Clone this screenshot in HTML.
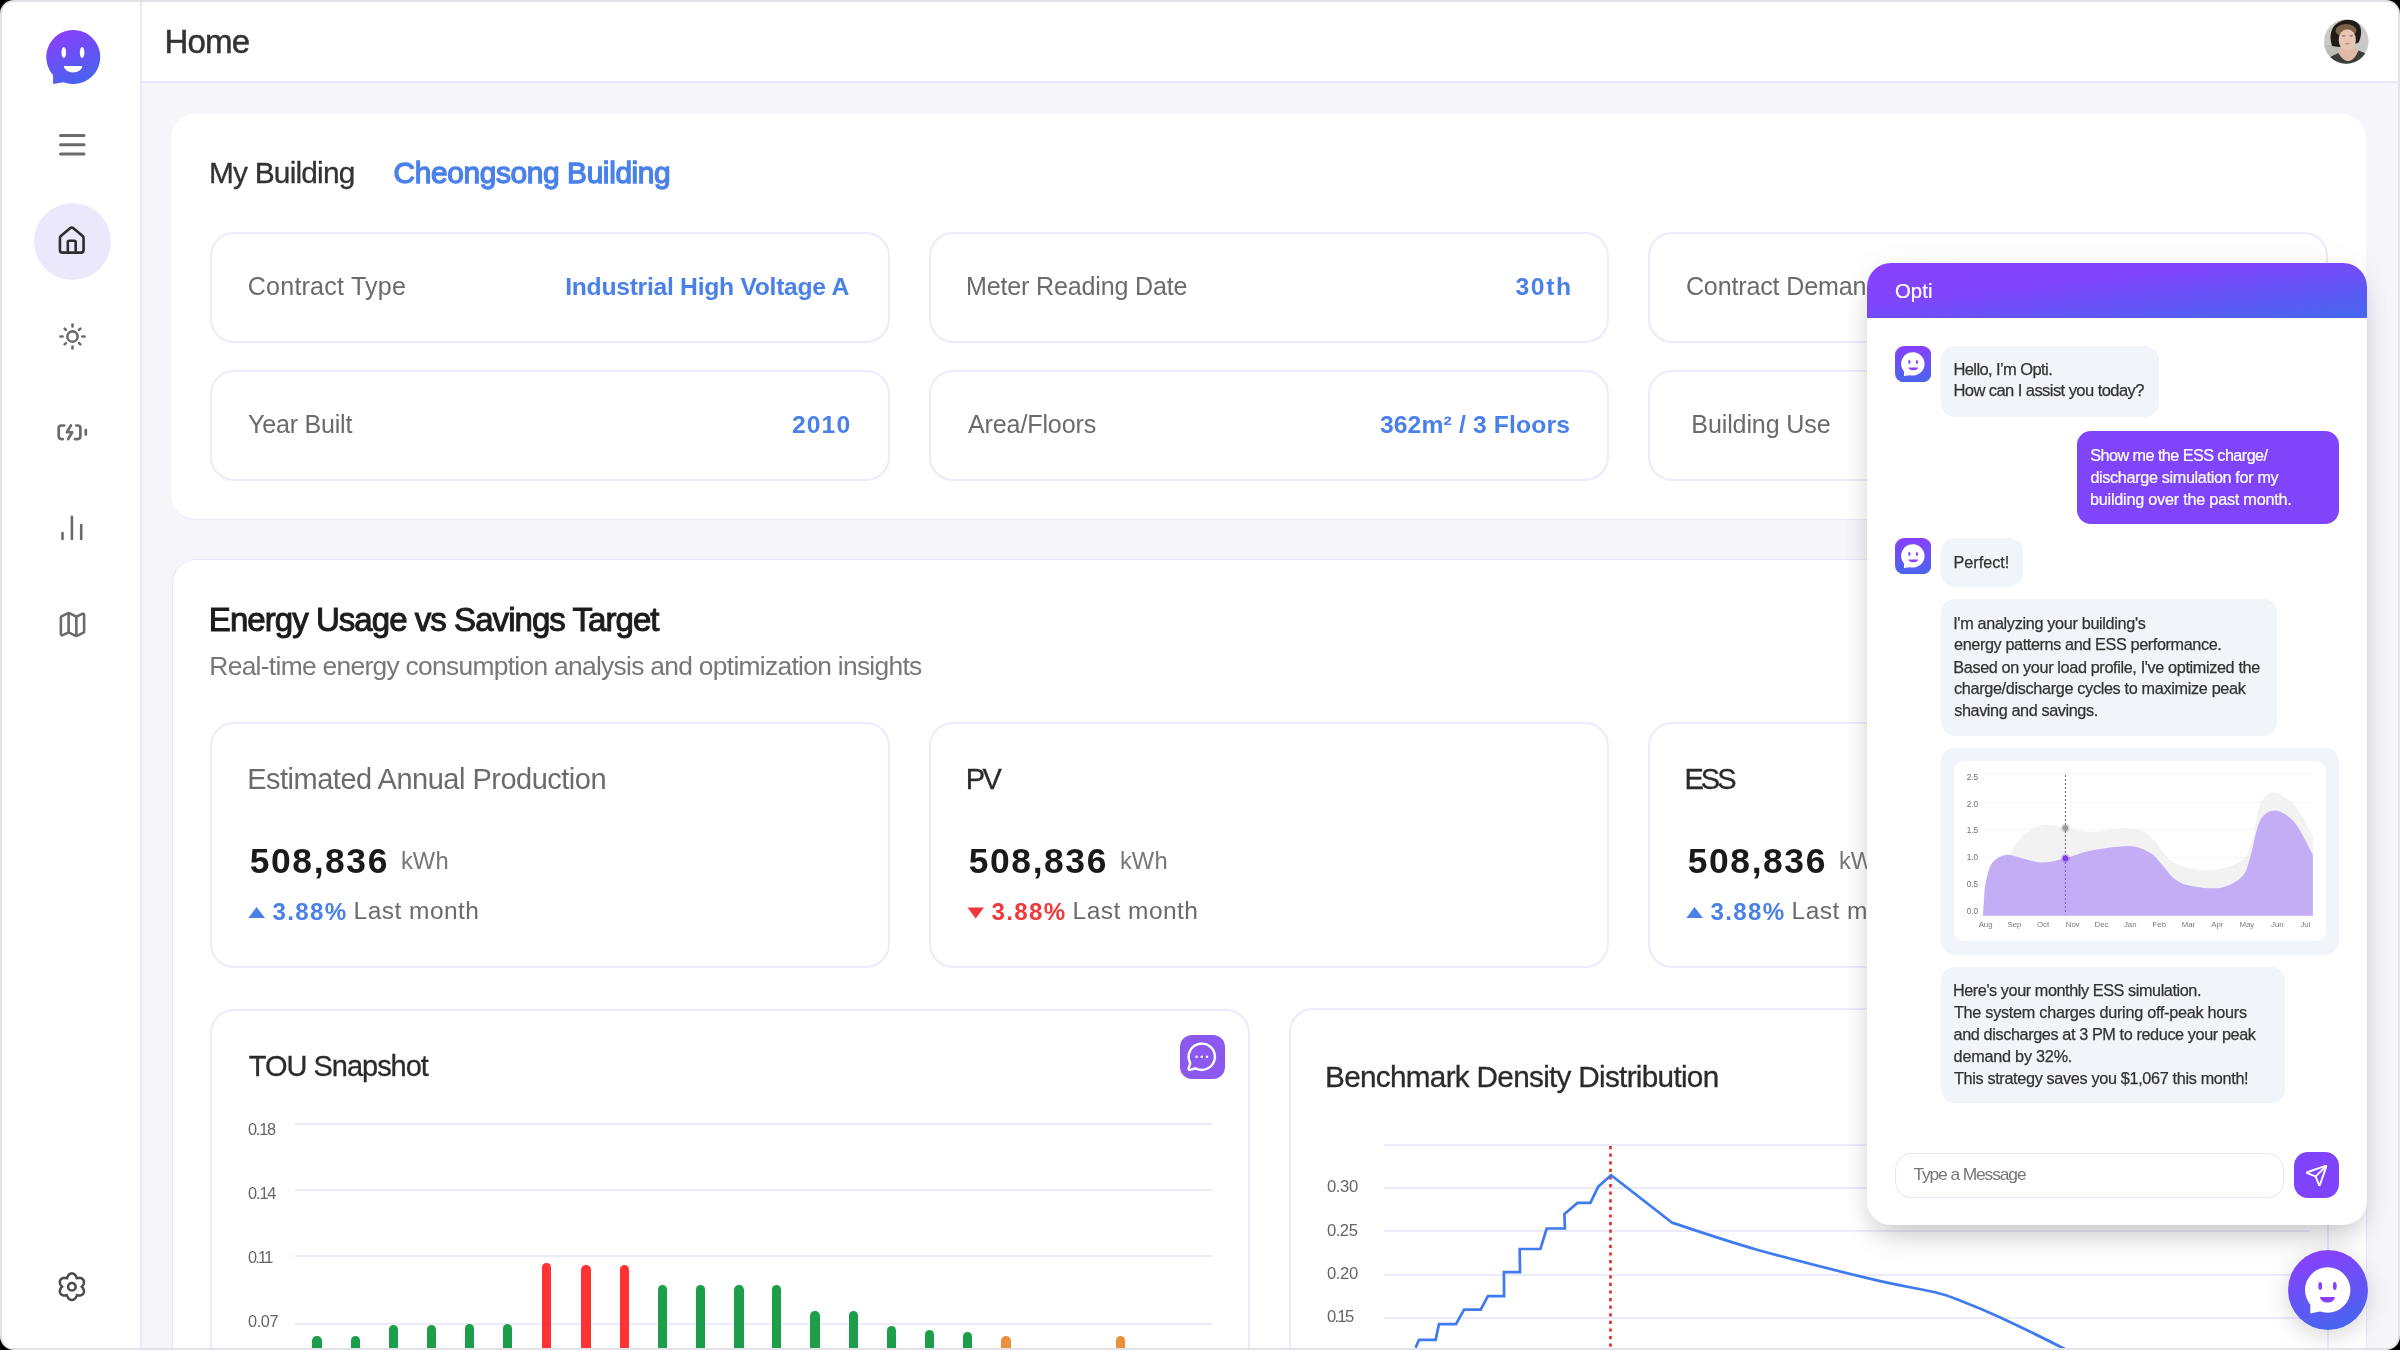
<!DOCTYPE html><html><head><meta charset="utf-8"><style>
html,body{margin:0;padding:0;background:#000;width:2400px;height:1350px;overflow:hidden}
#frame{position:absolute;left:0;top:0;width:2400px;height:1350px;border-radius:14px;background:#e2e2e8;overflow:hidden}
#page{position:absolute;left:2px;top:2px;width:2396px;height:1346px;border-radius:12px;overflow:hidden;background:#fff}
#inner{position:absolute;left:-2px;top:-2px;width:2400px;height:1350px;will-change:transform}
.b{position:absolute}
.t{position:absolute;white-space:nowrap;line-height:1;font-family:"Liberation Sans", sans-serif}
</style></head><body><div id="frame"><div id="page"><div id="inner">
<div class="b" style="left:142px;top:83px;width:2256px;height:1265px;background:#f5f5fa"></div>
<div class="b" style="left:0;top:0;width:140px;height:1350px;background:#fff"></div>
<div class="b" style="left:140px;top:0;width:2px;height:1350px;background:#ebe8fb"></div>
<div class="b" style="left:142px;top:0;width:2258px;height:81px;background:#fff"></div>
<div class="b" style="left:142px;top:81px;width:2258px;height:2px;background:#ebe8fb"></div>
<svg class="b" style="left:0;top:0" width="140" height="100" viewBox="0 0 140 100">
<defs><linearGradient id="lg1" x1="0.3" y1="0" x2="0.7" y2="1"><stop offset="0" stop-color="#8a3ffd"/><stop offset="1" stop-color="#4464ee"/></linearGradient></defs>
<path d="M53.1 75 A27 27 0 1 1 63.5 82.2 L53.1 84.1 Z" fill="url(#lg1)"/>
<ellipse cx="63.8" cy="52.5" rx="2.3" ry="5.4" fill="#fff"/><ellipse cx="82.1" cy="52.5" rx="2.3" ry="5.4" fill="#fff"/>
<path d="M63.8 65.9 L82.4 65.9 A9.3 6.5 0 0 1 63.8 65.9 Z" fill="#fff"/>
</svg>
<svg class="b" style="left:0;top:120px" width="140" height="50"><g stroke="#6b6b6b" stroke-width="3" stroke-linecap="round"><line x1="60.5" y1="15.5" x2="84" y2="15.5"/><line x1="60.5" y1="24.8" x2="84" y2="24.8"/><line x1="60.5" y1="34.1" x2="84" y2="34.1"/></g></svg>
<div class="b" style="left:34px;top:203px;width:77px;height:77px;border-radius:50%;background:#ece8fb"></div>
<svg class="b" style="left:56.35px;top:224.75px" width="31.5" height="31.5" viewBox="0 0 24 24" fill="none" stroke="#2e2e2e" stroke-width="2" stroke-linecap="round" stroke-linejoin="round"><path d="M15 21v-8a1 1 0 0 0-1-1h-4a1 1 0 0 0-1 1v8"/><path d="M3 10a2 2 0 0 1 .709-1.528l7-5.999a2 2 0 0 1 2.582 0l7 5.999A2 2 0 0 1 21 10v9a2 2 0 0 1-2 2H5a2 2 0 0 1-2-2z"/></svg>
<svg class="b" style="left:56.70px;top:321.30px" width="31" height="31" viewBox="0 0 24 24" fill="none" stroke="#6b6b6b" stroke-width="2" stroke-linecap="round" stroke-linejoin="round"><circle cx="12" cy="12" r="4"/><path d="M19.70 12.00 L21.30 12.00"/><path d="M17.09 17.09 L18.08 18.08"/><path d="M12.00 19.70 L12.00 21.30"/><path d="M6.91 17.09 L5.92 18.08"/><path d="M4.30 12.00 L2.70 12.00"/><path d="M6.91 6.91 L5.92 5.92"/><path d="M12.00 4.30 L12.00 2.70"/><path d="M17.09 6.91 L18.08 5.92"/></svg>
<svg class="b" style="left:55.95px;top:415.75px" width="32.5" height="32.5" viewBox="0 0 24 24" fill="none" stroke="#6b6b6b" stroke-width="2" stroke-linecap="round" stroke-linejoin="round"><path d="M15 7h1a2 2 0 0 1 2 2v6a2 2 0 0 1-2 2h-2"/><path d="M6 7H4a2 2 0 0 0-2 2v6a2 2 0 0 0 2 2h1"/><path d="m11 7-3 5h4l-3 5"/><line x1="22" x2="22" y1="10.4" y2="13.6"/></svg>
<svg class="b" style="left:0;top:500px" width="140" height="50"><g stroke="#6b6b6b" stroke-width="2.6" stroke-linecap="round"><line x1="62.5" y1="39" x2="62.5" y2="33"/><line x1="71.9" y1="39" x2="71.9" y2="16.7"/><line x1="81.2" y1="39" x2="81.2" y2="25"/></g></svg>
<svg class="b" style="left:56.50px;top:608.50px" width="31" height="31" viewBox="0 0 24 24" fill="none" stroke="#6b6b6b" stroke-width="2" stroke-linecap="round" stroke-linejoin="round"><path d="M14.106 5.553a2 2 0 0 0 1.788 0l3.659-1.83A1 1 0 0 1 21 4.619v12.764a1 1 0 0 1-.553.894l-4.553 2.277a2 2 0 0 1-1.788 0l-4.212-2.106a2 2 0 0 0-1.788 0l-3.659 1.83A1 1 0 0 1 3 19.381V6.618a1 1 0 0 1 .553-.894l4.553-2.277a2 2 0 0 1 1.788 0z"/><path d="M15 5.764v15"/><path d="M9 3.236v15"/></svg>
<svg class="b" style="left:0;top:0" width="140" height="1350"><path d="M81.60 1286.70 L81.79 1286.87 L81.97 1287.05 L82.15 1287.24 L82.32 1287.43 L82.49 1287.63 L82.65 1287.83 L82.81 1288.04 L82.96 1288.25 L83.09 1288.47 L83.23 1288.70 L83.35 1288.92 L83.46 1289.16 L83.56 1289.39 L83.65 1289.63 L83.73 1289.87 L83.80 1290.11 L83.85 1290.35 L83.90 1290.60 L83.93 1290.84 L83.94 1291.08 L83.95 1291.33 L83.94 1291.57 L83.92 1291.80 L83.89 1292.04 L83.84 1292.27 L83.78 1292.50 L83.71 1292.72 L83.63 1292.93 L83.53 1293.15 L83.42 1293.35 L83.30 1293.55 L83.16 1293.74 L83.02 1293.92 L82.86 1294.09 L82.69 1294.26 L82.52 1294.41 L82.33 1294.56 L82.14 1294.70 L81.93 1294.82 L81.72 1294.94 L81.50 1295.04 L81.27 1295.14 L81.04 1295.22 L80.80 1295.30 L80.56 1295.36 L80.31 1295.41 L80.06 1295.45 L79.81 1295.48 L79.55 1295.50 L79.29 1295.51 L79.03 1295.51 L78.77 1295.50 L78.51 1295.48 L78.26 1295.45 L78.00 1295.41 L77.74 1295.36 L77.49 1295.31 L77.24 1295.25 L76.99 1295.18 L76.75 1295.10 L76.69 1295.35 L76.63 1295.60 L76.56 1295.84 L76.48 1296.09 L76.39 1296.34 L76.30 1296.58 L76.19 1296.82 L76.08 1297.05 L75.96 1297.28 L75.83 1297.51 L75.70 1297.73 L75.55 1297.94 L75.40 1298.14 L75.24 1298.34 L75.07 1298.53 L74.89 1298.71 L74.71 1298.88 L74.52 1299.04 L74.33 1299.19 L74.13 1299.32 L73.92 1299.45 L73.71 1299.56 L73.49 1299.66 L73.27 1299.75 L73.05 1299.83 L72.82 1299.89 L72.59 1299.94 L72.36 1299.97 L72.13 1299.99 L71.90 1300.00 L71.67 1299.99 L71.44 1299.97 L71.21 1299.94 L70.98 1299.89 L70.75 1299.83 L70.53 1299.75 L70.31 1299.66 L70.09 1299.56 L69.88 1299.45 L69.67 1299.32 L69.47 1299.19 L69.28 1299.04 L69.09 1298.88 L68.91 1298.71 L68.73 1298.53 L68.56 1298.34 L68.40 1298.14 L68.25 1297.94 L68.10 1297.73 L67.97 1297.51 L67.84 1297.28 L67.72 1297.05 L67.61 1296.82 L67.50 1296.58 L67.41 1296.34 L67.32 1296.09 L67.24 1295.84 L67.17 1295.60 L67.11 1295.35 L67.05 1295.10 L66.81 1295.18 L66.56 1295.25 L66.31 1295.31 L66.06 1295.36 L65.80 1295.41 L65.54 1295.45 L65.29 1295.48 L65.03 1295.50 L64.77 1295.51 L64.51 1295.51 L64.25 1295.50 L63.99 1295.48 L63.74 1295.45 L63.49 1295.41 L63.24 1295.36 L63.00 1295.30 L62.76 1295.22 L62.53 1295.14 L62.30 1295.04 L62.08 1294.94 L61.87 1294.82 L61.66 1294.70 L61.47 1294.56 L61.28 1294.41 L61.11 1294.26 L60.94 1294.09 L60.78 1293.92 L60.64 1293.74 L60.50 1293.55 L60.38 1293.35 L60.27 1293.15 L60.17 1292.93 L60.09 1292.72 L60.02 1292.50 L59.96 1292.27 L59.91 1292.04 L59.88 1291.80 L59.86 1291.57 L59.85 1291.33 L59.86 1291.08 L59.87 1290.84 L59.90 1290.60 L59.95 1290.35 L60.00 1290.11 L60.07 1289.87 L60.15 1289.63 L60.24 1289.39 L60.34 1289.16 L60.45 1288.92 L60.57 1288.70 L60.71 1288.47 L60.84 1288.25 L60.99 1288.04 L61.15 1287.83 L61.31 1287.63 L61.48 1287.43 L61.65 1287.24 L61.83 1287.05 L62.01 1286.87 L62.20 1286.70 L62.01 1286.53 L61.83 1286.35 L61.65 1286.16 L61.48 1285.97 L61.31 1285.77 L61.15 1285.57 L60.99 1285.36 L60.84 1285.15 L60.71 1284.93 L60.57 1284.70 L60.45 1284.48 L60.34 1284.24 L60.24 1284.01 L60.15 1283.77 L60.07 1283.53 L60.00 1283.29 L59.95 1283.05 L59.90 1282.80 L59.87 1282.56 L59.86 1282.32 L59.85 1282.07 L59.86 1281.83 L59.88 1281.60 L59.91 1281.36 L59.96 1281.13 L60.02 1280.90 L60.09 1280.68 L60.17 1280.47 L60.27 1280.25 L60.38 1280.05 L60.50 1279.85 L60.64 1279.66 L60.78 1279.48 L60.94 1279.31 L61.11 1279.14 L61.28 1278.99 L61.47 1278.84 L61.66 1278.70 L61.87 1278.58 L62.08 1278.46 L62.30 1278.36 L62.53 1278.26 L62.76 1278.18 L63.00 1278.10 L63.24 1278.04 L63.49 1277.99 L63.74 1277.95 L63.99 1277.92 L64.25 1277.90 L64.51 1277.89 L64.77 1277.89 L65.03 1277.90 L65.29 1277.92 L65.54 1277.95 L65.80 1277.99 L66.06 1278.04 L66.31 1278.09 L66.56 1278.15 L66.81 1278.22 L67.05 1278.30 L67.11 1278.05 L67.17 1277.80 L67.24 1277.56 L67.32 1277.31 L67.41 1277.06 L67.50 1276.82 L67.61 1276.58 L67.72 1276.35 L67.84 1276.12 L67.97 1275.89 L68.10 1275.67 L68.25 1275.46 L68.40 1275.26 L68.56 1275.06 L68.73 1274.87 L68.91 1274.69 L69.09 1274.52 L69.28 1274.36 L69.47 1274.21 L69.67 1274.08 L69.88 1273.95 L70.09 1273.84 L70.31 1273.74 L70.53 1273.65 L70.75 1273.57 L70.98 1273.51 L71.21 1273.46 L71.44 1273.43 L71.67 1273.41 L71.90 1273.40 L72.13 1273.41 L72.36 1273.43 L72.59 1273.46 L72.82 1273.51 L73.05 1273.57 L73.27 1273.65 L73.49 1273.74 L73.71 1273.84 L73.92 1273.95 L74.13 1274.08 L74.33 1274.21 L74.52 1274.36 L74.71 1274.52 L74.89 1274.69 L75.07 1274.87 L75.24 1275.06 L75.40 1275.26 L75.55 1275.46 L75.70 1275.67 L75.83 1275.89 L75.96 1276.12 L76.08 1276.35 L76.19 1276.58 L76.30 1276.82 L76.39 1277.06 L76.48 1277.31 L76.56 1277.56 L76.63 1277.80 L76.69 1278.05 L76.75 1278.30 L76.99 1278.22 L77.24 1278.15 L77.49 1278.09 L77.74 1278.04 L78.00 1277.99 L78.26 1277.95 L78.51 1277.92 L78.77 1277.90 L79.03 1277.89 L79.29 1277.89 L79.55 1277.90 L79.81 1277.92 L80.06 1277.95 L80.31 1277.99 L80.56 1278.04 L80.80 1278.10 L81.04 1278.18 L81.27 1278.26 L81.50 1278.36 L81.72 1278.46 L81.93 1278.58 L82.14 1278.70 L82.33 1278.84 L82.52 1278.99 L82.69 1279.14 L82.86 1279.31 L83.02 1279.48 L83.16 1279.66 L83.30 1279.85 L83.42 1280.05 L83.53 1280.25 L83.63 1280.47 L83.71 1280.68 L83.78 1280.90 L83.84 1281.13 L83.89 1281.36 L83.92 1281.60 L83.94 1281.83 L83.95 1282.07 L83.94 1282.32 L83.93 1282.56 L83.90 1282.80 L83.85 1283.05 L83.80 1283.29 L83.73 1283.53 L83.65 1283.77 L83.56 1284.01 L83.46 1284.24 L83.35 1284.48 L83.23 1284.70 L83.09 1284.93 L82.96 1285.15 L82.81 1285.36 L82.65 1285.57 L82.49 1285.77 L82.32 1285.97 L82.15 1286.16 L81.97 1286.35 L81.79 1286.53 L81.60 1286.70Z" fill="none" stroke="#4a4a4a" stroke-width="2.5" stroke-linejoin="round"/><circle cx="71.9" cy="1286.7" r="3.8" fill="none" stroke="#4a4a4a" stroke-width="2.5"/></svg>
<div class="t" style="left:164.52px;top:24.71px;font-size:33.04px;letter-spacing:-0.840px;color:#333333;-webkit-text-stroke:0.5px #333333;">Home</div>
<svg class="b" style="left:2324px;top:18.5px" width="45" height="45" viewBox="0 0 45 45">
<defs><clipPath id="avc"><circle cx="22.3" cy="22.5" r="22.3"/></clipPath></defs>
<g clip-path="url(#avc)"><rect width="45" height="45" fill="#c9c9c7"/>
<rect x="0" y="26" width="18" height="19" fill="#bdbeba"/>
<path d="M8 27 Q4 14 11 6 Q19 -1 30 1.5 Q38 5 37 15 Q36 22 34 24 L15 28 Z" fill="#1e1b18"/>
<ellipse cx="22" cy="11.5" rx="10.5" ry="6.5" fill="#7b624a"/>
<path d="M14 34 Q16 29 18 27 L29 27 Q32 29 35 32 Q29 42 24.5 42.2 Q18 42 14 34 Z" fill="#dfbaa5"/>
<ellipse cx="23.3" cy="21" rx="8.6" ry="10.8" fill="#e6c6b3"/>
<ellipse cx="19.7" cy="16.8" rx="1.9" ry="0.9" fill="#9c8074"/><ellipse cx="27.4" cy="16.8" rx="1.9" ry="0.9" fill="#9c8074"/>
<ellipse cx="23.5" cy="24.7" rx="2.6" ry="0.8" fill="#b98c82"/>
<path d="M0 45 L2 40 Q8 37 14.4 33.9 Q19 42 24.5 42.2 Q30 42 34.6 31.5 Q39 33 45 36 L45 45 Z" fill="#3b3d39"/>
</g></svg>
<div class="b" style="left:171px;top:114px;width:2195px;height:406px;background:#fff;border-radius:24px;border-bottom:1.5px solid #ebe8fb;box-sizing:border-box"></div>
<div class="t" style="left:209.07px;top:157.62px;font-size:29.86px;letter-spacing:-0.811px;color:#333333;-webkit-text-stroke:0.3px #333333;">My Building</div>
<div class="t" style="left:393.60px;top:157.62px;font-size:29.86px;letter-spacing:-0.376px;color:#4a80ea;-webkit-text-stroke:1.3px #4a80ea;">Cheongsong Building</div>
<div class="b" style="left:210px;top:232px;width:680px;height:111px;border:2px solid #eceafc;border-radius:24px;box-sizing:border-box"></div>
<div class="b" style="left:210px;top:370px;width:680px;height:111px;border:2px solid #eceafc;border-radius:24px;box-sizing:border-box"></div>
<div class="b" style="left:929px;top:232px;width:680px;height:111px;border:2px solid #eceafc;border-radius:24px;box-sizing:border-box"></div>
<div class="b" style="left:929px;top:370px;width:680px;height:111px;border:2px solid #eceafc;border-radius:24px;box-sizing:border-box"></div>
<div class="b" style="left:1648px;top:232px;width:680px;height:111px;border:2px solid #eceafc;border-radius:24px;box-sizing:border-box"></div>
<div class="b" style="left:1648px;top:370px;width:680px;height:111px;border:2px solid #eceafc;border-radius:24px;box-sizing:border-box"></div>
<div class="t" style="left:247.80px;top:274.49px;font-size:25.07px;letter-spacing:0.206px;color:#6b6b6b;">Contract Type</div>
<div class="t" style="left:565.20px;top:274.79px;font-size:24.71px;letter-spacing:-0.285px;color:#4a80ea;font-weight:bold;">Industrial High Voltage A</div>
<div class="t" style="left:248.00px;top:412.49px;font-size:25.07px;letter-spacing:-0.215px;color:#6b6b6b;">Year Built</div>
<div class="t" style="left:791.90px;top:412.79px;font-size:24.71px;letter-spacing:1.123px;color:#4a80ea;font-weight:bold;">2010</div>
<div class="t" style="left:966.00px;top:274.49px;font-size:25.07px;letter-spacing:-0.161px;color:#6b6b6b;">Meter Reading Date</div>
<div class="t" style="left:1515.40px;top:274.79px;font-size:24.71px;letter-spacing:1.661px;color:#4a80ea;font-weight:bold;">30th</div>
<div class="t" style="left:968.00px;top:412.49px;font-size:25.07px;letter-spacing:-0.135px;color:#6b6b6b;">Area/Floors</div>
<div class="t" style="left:1379.90px;top:412.79px;font-size:24.71px;letter-spacing:0.126px;color:#4a80ea;font-weight:bold;">362m² / 3 Floors</div>
<div class="t" style="left:1685.90px;top:274.49px;font-size:25.07px;letter-spacing:-0.146px;color:#6b6b6b">Contract Demand</div>
<div class="t" style="left:1691.30px;top:412.49px;font-size:25.07px;letter-spacing:-0.129px;color:#6b6b6b;">Building Use</div>
<div class="b" style="left:171.5px;top:559px;width:2195.0px;height:841px;background:#fff;border:1.5px solid #e9e6fb;border-radius:24px;box-sizing:border-box"></div>
<div class="t" style="left:208.82px;top:603.01px;font-size:33.04px;letter-spacing:-0.962px;color:#1c1c1c;-webkit-text-stroke:1.0px #1c1c1c;">Energy Usage vs Savings Target</div>
<div class="t" style="left:209.34px;top:653.38px;font-size:26.38px;letter-spacing:-0.702px;color:#777777;">Real-time energy consumption analysis and optimization insights</div>
<div class="b" style="left:210px;top:722px;width:680px;height:246px;border:2px solid #eceafc;border-radius:24px;box-sizing:border-box"></div>
<div class="t" style="left:247.24px;top:765.16px;font-size:28.99px;letter-spacing:-0.497px;color:#6b6b6b;">Estimated Annual Production</div>
<div class="t" style="left:249.75px;top:844.19px;font-size:35.43px;letter-spacing:1.595px;color:#1a1a1a;font-weight:bold;">508,836</div>
<div class="t" style="left:400.90px;top:849.74px;font-size:23.71px;letter-spacing:0.131px;color:#777777;">kWh</div>
<svg class="b" style="left:248px;top:906px" width="18" height="13"><path d="M8.5 1 L17 12 L0.5 12Z" fill="#4a80ea"/></svg>
<div class="t" style="left:272.40px;top:899.68px;font-size:24.14px;letter-spacing:1.379px;color:#4a80ea;font-weight:bold;">3.88%</div>
<div class="t" style="left:353.60px;top:899.38px;font-size:24.49px;letter-spacing:0.473px;color:#6b6b6b;">Last month</div>
<div class="b" style="left:929px;top:722px;width:680px;height:246px;border:2px solid #eceafc;border-radius:24px;box-sizing:border-box"></div>
<div class="t" style="left:965.64px;top:765.16px;font-size:28.99px;letter-spacing:-2.443px;color:#2b2b2b;-webkit-text-stroke:0.3px #2b2b2b;">PV</div>
<div class="t" style="left:968.75px;top:844.19px;font-size:35.43px;letter-spacing:1.595px;color:#1a1a1a;font-weight:bold;">508,836</div>
<div class="t" style="left:1119.90px;top:849.74px;font-size:23.71px;letter-spacing:0.131px;color:#777777;">kWh</div>
<svg class="b" style="left:967px;top:906px" width="18" height="13"><path d="M0.5 1.5 L17 1.5 L8.7 12.5Z" fill="#f0383a"/></svg>
<div class="t" style="left:991.40px;top:899.68px;font-size:24.14px;letter-spacing:1.379px;color:#f0383a;font-weight:bold;">3.88%</div>
<div class="t" style="left:1072.60px;top:899.38px;font-size:24.49px;letter-spacing:0.473px;color:#6b6b6b;">Last month</div>
<div class="b" style="left:1648px;top:722px;width:680px;height:246px;border:2px solid #eceafc;border-radius:24px;box-sizing:border-box"></div>
<div class="t" style="left:1684.44px;top:765.16px;font-size:28.99px;letter-spacing:-2.908px;color:#2b2b2b;-webkit-text-stroke:0.3px #2b2b2b;">ESS</div>
<div class="t" style="left:1687.75px;top:844.19px;font-size:35.43px;letter-spacing:1.595px;color:#1a1a1a;font-weight:bold;">508,836</div>
<div class="t" style="left:1838.90px;top:849.74px;font-size:23.71px;letter-spacing:0.131px;color:#777777;">kWh</div>
<svg class="b" style="left:1686px;top:906px" width="18" height="13"><path d="M8.5 1 L17 12 L0.5 12Z" fill="#4a80ea"/></svg>
<div class="t" style="left:1710.40px;top:899.68px;font-size:24.14px;letter-spacing:1.379px;color:#4a80ea;font-weight:bold;">3.88%</div>
<div class="t" style="left:1791.60px;top:899.38px;font-size:24.49px;letter-spacing:0.473px;color:#6b6b6b;">Last month</div>
<div class="b" style="left:210px;top:1009px;width:1040px;height:391px;background:#fff;border:2px solid #eceafc;border-radius:24px;box-sizing:border-box"></div>
<div class="t" style="left:248.75px;top:1052.46px;font-size:28.99px;letter-spacing:-1.003px;color:#2b2b2b;-webkit-text-stroke:0.3px #2b2b2b;">TOU Snapshot</div>
<div class="b" style="left:1180px;top:1034.5px;width:45px;height:44px;border-radius:12px;background:#8b58f0"></div>
<svg class="b" style="left:1185.75px;top:1040.55px" width="31.5" height="31.5" viewBox="0 0 24 24" fill="none" stroke="#ffffff" stroke-width="1.85" stroke-linecap="round" stroke-linejoin="round"><path d="M2.992 16.342a2 2 0 0 1 .094 1.167l-1.065 3.29a1 1 0 0 0 1.236 1.168l3.413-.998a2 2 0 0 1 1.099.092 10 10 0 1 0-4.777-4.719"/><path d="M8 12h.01"/><path d="M12 12h.01"/><path d="M16 12h.01"/></svg>
<div class="b" style="left:295px;top:1123px;width:917px;height:2px;background:#edebfb"></div>
<div class="b" style="left:295px;top:1189px;width:917px;height:2px;background:#edebfb"></div>
<div class="b" style="left:295px;top:1255px;width:917px;height:2px;background:#edebfb"></div>
<div class="b" style="left:295px;top:1323px;width:917px;height:2px;background:#edebfb"></div>
<div class="b" style="left:312.3px;top:1336.4px;width:9.4px;height:23.6px;background:#1d9e48;border-radius:4.7px 4.7px 0 0"></div>
<div class="b" style="left:350.5px;top:1336.4px;width:9.4px;height:23.6px;background:#1d9e48;border-radius:4.7px 4.7px 0 0"></div>
<div class="b" style="left:388.7px;top:1325.2px;width:9.4px;height:34.8px;background:#1d9e48;border-radius:4.7px 4.7px 0 0"></div>
<div class="b" style="left:426.9px;top:1325.2px;width:9.4px;height:34.8px;background:#1d9e48;border-radius:4.7px 4.7px 0 0"></div>
<div class="b" style="left:465.1px;top:1323.6px;width:9.4px;height:36.4px;background:#1d9e48;border-radius:4.7px 4.7px 0 0"></div>
<div class="b" style="left:503.1px;top:1323.6px;width:9.4px;height:36.4px;background:#1d9e48;border-radius:4.7px 4.7px 0 0"></div>
<div class="b" style="left:541.5px;top:1262.9px;width:9.4px;height:97.1px;background:#ff3333;border-radius:4.7px 4.7px 0 0"></div>
<div class="b" style="left:581.4px;top:1264.5px;width:9.4px;height:95.5px;background:#ff3333;border-radius:4.7px 4.7px 0 0"></div>
<div class="b" style="left:619.6px;top:1264.5px;width:9.4px;height:95.5px;background:#ff3333;border-radius:4.7px 4.7px 0 0"></div>
<div class="b" style="left:657.8px;top:1285.0px;width:9.4px;height:75.0px;background:#1d9e48;border-radius:4.7px 4.7px 0 0"></div>
<div class="b" style="left:696.0px;top:1285.0px;width:9.4px;height:75.0px;background:#1d9e48;border-radius:4.7px 4.7px 0 0"></div>
<div class="b" style="left:734.2px;top:1285.0px;width:9.4px;height:75.0px;background:#1d9e48;border-radius:4.7px 4.7px 0 0"></div>
<div class="b" style="left:772.1px;top:1285.4px;width:9.4px;height:74.6px;background:#1d9e48;border-radius:4.7px 4.7px 0 0"></div>
<div class="b" style="left:810.3px;top:1310.9px;width:9.4px;height:49.1px;background:#1d9e48;border-radius:4.7px 4.7px 0 0"></div>
<div class="b" style="left:848.5px;top:1310.9px;width:9.4px;height:49.1px;background:#1d9e48;border-radius:4.7px 4.7px 0 0"></div>
<div class="b" style="left:886.7px;top:1325.6px;width:9.4px;height:34.4px;background:#1d9e48;border-radius:4.7px 4.7px 0 0"></div>
<div class="b" style="left:924.9px;top:1330.1px;width:9.4px;height:29.9px;background:#1d9e48;border-radius:4.7px 4.7px 0 0"></div>
<div class="b" style="left:963.1px;top:1331.7px;width:9.4px;height:28.3px;background:#1d9e48;border-radius:4.7px 4.7px 0 0"></div>
<div class="b" style="left:1001.3px;top:1336.4px;width:9.4px;height:23.6px;background:#e8913a;border-radius:4.7px 4.7px 0 0"></div>
<div class="b" style="left:1115.5px;top:1336.4px;width:9.4px;height:23.6px;background:#e8913a;border-radius:4.7px 4.7px 0 0"></div>
<div class="b" style="left:1289px;top:1008px;width:1040px;height:392px;background:#fff;border:2px solid #eceafc;border-radius:24px;box-sizing:border-box"></div>
<div class="t" style="left:1325.08px;top:1062.15px;font-size:29.71px;letter-spacing:-0.698px;color:#2b2b2b;-webkit-text-stroke:0.3px #2b2b2b;">Benchmark Density Distribution</div>
<div class="b" style="left:1384px;top:1144px;width:926px;height:2px;background:#edebfb"></div>
<div class="b" style="left:1384px;top:1187px;width:926px;height:2px;background:#edebfb"></div>
<div class="b" style="left:1384px;top:1230px;width:926px;height:2px;background:#edebfb"></div>
<div class="b" style="left:1384px;top:1274px;width:926px;height:2px;background:#edebfb"></div>
<div class="b" style="left:1384px;top:1317px;width:926px;height:2px;background:#edebfb"></div>
<svg class="b" style="left:0;top:0" width="2400" height="1350"><line x1="1610.5" y1="1146" x2="1610.5" y2="1350" stroke="#f02a2a" stroke-width="2.7" stroke-dasharray="3.2 4.4"/><path d="M1415.6 1347.8 L1419 1339.9 L1435.6 1339.9 L1439 1324.1 L1456 1324.1 L1464.1 1309.7 L1480.7 1309.7 L1487.9 1296.2 L1504.1 1296.2 L1503.9 1272.2 L1520 1272.2 L1519.7 1249 L1540.4 1249 L1546.7 1228.5 L1564.9 1228.5 L1564.4 1214 L1577.5 1202.9 L1590.4 1202.9 L1598.2 1186.7 L1611.1 1175.2 L1671.9 1222.6 C1685.80 1227.03 1721.83 1239.73 1755.30 1249.20 C1788.77 1258.67 1842.75 1272.22 1872.70 1279.40 C1902.65 1286.58 1920.03 1288.63 1935.00 1292.30 C1949.97 1295.97 1951.80 1297.28 1962.50 1301.40 C1973.20 1305.52 1982.40 1309.20 1999.20 1317.00 C2016.00 1324.80 2049.83 1341.37 2063.30 1348.20 C2076.77 1355.03 2077.22 1356.37 2080.00 1358.00" fill="none" stroke="#3f7bef" stroke-width="2.7" stroke-linejoin="miter"/></svg>
<div class="t" style="left:248.00px;top:1121.39px;font-size:16.30px;letter-spacing:-1.221px;color:#666666;">0.18</div>
<div class="t" style="left:248.00px;top:1185.49px;font-size:16.30px;letter-spacing:-1.088px;color:#666666;">0.14</div>
<div class="t" style="left:248.00px;top:1249.49px;font-size:16.30px;letter-spacing:-1.751px;color:#666666;">0.11</div>
<div class="t" style="left:248.00px;top:1313.49px;font-size:16.30px;letter-spacing:-0.405px;color:#666666;">0.07</div>
<div class="t" style="left:1326.90px;top:1179.23px;font-size:16.67px;letter-spacing:-0.356px;color:#666666;">0.30</div>
<div class="t" style="left:1326.90px;top:1222.63px;font-size:16.67px;letter-spacing:-0.456px;color:#666666;">0.25</div>
<div class="t" style="left:1326.90px;top:1265.93px;font-size:16.67px;letter-spacing:-0.356px;color:#666666;">0.20</div>
<div class="t" style="left:1326.90px;top:1309.33px;font-size:16.67px;letter-spacing:-1.722px;color:#666666;">0.15</div>
<div class="b" style="left:1867px;top:263px;width:499.5px;height:962px;border-radius:24px;background:#fff;box-shadow:0 18px 30px -8px rgba(0,0,0,0.20), 0 0 28px rgba(0,0,0,0.06);overflow:hidden"><div class="b" style="left:0;top:0;width:100%;height:55px;background:linear-gradient(174deg,#8841fd 0%,#7e45fb 38%,#4568ee 100%)"></div></div>
<div class="t" style="left:1894.90px;top:281.35px;font-size:20.29px;letter-spacing:0.167px;color:#ffffff;-webkit-text-stroke:0.2px #ffffff;">Opti</div>
<svg class="b" style="left:1894.9px;top:345.6px" width="36.4" height="36.4" viewBox="0 0 36.4 36.4">
<defs><linearGradient id="bg345" x1="0" y1="0" x2="0" y2="1"><stop offset="0" stop-color="#8740fd"/><stop offset="1" stop-color="#4a66ee"/></linearGradient></defs>
<rect width="36.4" height="36.4" rx="9" fill="url(#bg345)"/>
<path d="M9 30 L9 25.5 A11.7 11.7 0 1 1 15 29.2 Z" fill="#fff"/>
<ellipse cx="14.3" cy="16" rx="1.1" ry="2.1" fill="#8b3ffc"/><ellipse cx="21.9" cy="16" rx="1.1" ry="2.1" fill="#8b3ffc"/>
<path d="M13.7 21.6 L23 21.6 A4.65 2.6 0 0 1 13.7 21.6Z" fill="#8b3ffc"/>
</svg>
<svg class="b" style="left:1894.9px;top:538px" width="36.4" height="36.4" viewBox="0 0 36.4 36.4">
<defs><linearGradient id="bg538" x1="0" y1="0" x2="0" y2="1"><stop offset="0" stop-color="#8740fd"/><stop offset="1" stop-color="#4a66ee"/></linearGradient></defs>
<rect width="36.4" height="36.4" rx="9" fill="url(#bg538)"/>
<path d="M9 30 L9 25.5 A11.7 11.7 0 1 1 15 29.2 Z" fill="#fff"/>
<ellipse cx="14.3" cy="16" rx="1.1" ry="2.1" fill="#8b3ffc"/><ellipse cx="21.9" cy="16" rx="1.1" ry="2.1" fill="#8b3ffc"/>
<path d="M13.7 21.6 L23 21.6 A4.65 2.6 0 0 1 13.7 21.6Z" fill="#8b3ffc"/>
</svg>
<div class="b" style="left:1940.7px;top:345.6px;width:218.70000000000005px;height:71.19999999999999px;background:#f1f4f9;border-radius:14px"></div>
<div class="t" style="left:1953.40px;top:361.56px;font-size:16.52px;letter-spacing:-0.596px;color:#333333;-webkit-text-stroke:0.25px #333333;">Hello, I’m Opti.</div>
<div class="t" style="left:1953.40px;top:383.16px;font-size:16.52px;letter-spacing:-0.562px;color:#333333;-webkit-text-stroke:0.25px #333333;">How can I assist you today?</div>
<div class="b" style="left:2077px;top:430.6px;width:262.3000000000002px;height:93.29999999999995px;background:#8045fb;border-radius:14px"></div>
<div class="t" style="left:2090.30px;top:446.60px;font-size:16.23px;letter-spacing:-0.566px;color:#ffffff;-webkit-text-stroke:0.2px #ffffff;">Show me the ESS charge/</div>
<div class="t" style="left:2090.40px;top:468.60px;font-size:16.23px;letter-spacing:-0.351px;color:#ffffff;-webkit-text-stroke:0.2px #ffffff;">discharge simulation for my</div>
<div class="t" style="left:2090.00px;top:490.90px;font-size:16.23px;letter-spacing:-0.232px;color:#ffffff;-webkit-text-stroke:0.2px #ffffff;">building over the past month.</div>
<div class="b" style="left:1940.6px;top:538.1px;width:82.70000000000005px;height:48.69999999999993px;background:#f1f4f9;border-radius:14px"></div>
<div class="t" style="left:1953.60px;top:553.80px;font-size:16.23px;letter-spacing:-0.045px;color:#333333;-webkit-text-stroke:0.25px #333333;">Perfect!</div>
<div class="b" style="left:1940.6px;top:598.9px;width:336.5999999999999px;height:136.80000000000007px;background:#f1f4f9;border-radius:14px"></div>
<div class="t" style="left:1953.20px;top:614.50px;font-size:16.23px;letter-spacing:-0.327px;color:#333333;-webkit-text-stroke:0.25px #333333;">I'm analyzing your building's</div>
<div class="t" style="left:1954.00px;top:636.30px;font-size:16.23px;letter-spacing:-0.385px;color:#333333;-webkit-text-stroke:0.25px #333333;">energy patterns and ESS performance.</div>
<div class="t" style="left:1953.30px;top:658.50px;font-size:16.23px;letter-spacing:-0.361px;color:#333333;-webkit-text-stroke:0.25px #333333;">Based on your load profile, I've optimized the</div>
<div class="t" style="left:1954.00px;top:680.30px;font-size:16.23px;letter-spacing:-0.330px;color:#333333;-webkit-text-stroke:0.25px #333333;">charge/discharge cycles to maximize peak</div>
<div class="t" style="left:1954.20px;top:702.40px;font-size:16.23px;letter-spacing:-0.393px;color:#333333;-webkit-text-stroke:0.25px #333333;">shaving and savings.</div>
<div class="b" style="left:1940.5px;top:747.6px;width:398.8000000000002px;height:207.0px;background:#f1f4f9;border-radius:14px"></div>
<div class="b" style="left:1954px;top:761.3px;width:371.5999999999999px;height:180.0px;background:#fff;border-radius:10px"></div>
<svg class="b" style="left:0;top:0" width="2400" height="1350"><line x1="1982.9" x2="2312.9" y1="773.5" y2="773.5" stroke="#f4f4f6" stroke-width="0.8"/><line x1="1982.9" x2="2312.9" y1="802.3" y2="802.3" stroke="#f4f4f6" stroke-width="0.8"/><line x1="1982.9" x2="2312.9" y1="829.3" y2="829.3" stroke="#f4f4f6" stroke-width="0.8"/><line x1="1982.9" x2="2312.9" y1="857.4" y2="857.4" stroke="#f4f4f6" stroke-width="0.8"/><line x1="1982.9" x2="2312.9" y1="885.1" y2="885.1" stroke="#f4f4f6" stroke-width="0.8"/>
<path d="M1982.93 915.64 L1982.93 905.66 C1985.36 900.91 1992.96 885.87 1997.50 877.16 C2002.04 868.45 2005.68 860.54 2010.16 853.41 C2014.65 846.29 2018.87 839.16 2024.41 834.41 C2029.96 829.66 2036.55 825.97 2043.41 824.91 C2050.27 823.86 2057.40 826.89 2065.58 828.08 C2073.76 829.27 2082.73 832.04 2092.50 832.04 C2102.26 832.04 2115.45 828.08 2124.16 828.08 C2132.87 828.08 2139.47 829.66 2144.74 832.04 C2150.02 834.41 2151.34 837.45 2155.83 842.33 C2160.31 847.21 2165.06 856.84 2171.66 861.33 C2178.26 865.82 2187.49 867.93 2195.41 869.25 C2203.32 870.57 2211.24 870.83 2219.16 869.25 C2227.07 867.66 2237.37 864.76 2242.91 859.75 C2248.45 854.73 2249.50 848.40 2252.41 839.16 C2255.31 829.93 2256.89 812.12 2260.32 804.33 C2263.75 796.55 2267.98 792.99 2272.99 792.46 C2278.00 791.93 2285.66 797.34 2290.41 801.17 C2295.16 804.99 2297.74 809.61 2301.49 815.41 C2305.24 821.22 2310.99 832.57 2312.89 836.00 L2312.89 915.64Z" fill="#f2f2f2"/>
<path d="M1982.93 915.64 L1984.83 886.66 C1985.89 882.97 1987.73 869.77 1991.17 864.50 C1994.60 859.22 1999.87 855.92 2005.41 855.00 C2010.96 854.07 2018.34 857.69 2024.41 858.96 C2030.48 860.22 2034.97 862.73 2041.83 862.60 C2048.69 862.46 2057.14 860.22 2065.58 858.16 C2074.02 856.11 2081.68 852.23 2092.50 850.25 C2103.31 848.27 2120.73 845.76 2130.49 846.29 C2140.26 846.82 2146.06 850.64 2151.08 853.41 C2156.09 856.18 2156.35 858.43 2160.58 862.91 C2164.80 867.40 2170.60 876.37 2176.41 880.33 C2182.21 884.29 2187.76 885.47 2195.41 886.66 C2203.06 887.85 2214.41 889.30 2222.32 887.45 C2230.24 885.61 2238.16 880.99 2242.91 875.58 C2247.66 870.17 2247.92 864.23 2250.82 855.00 C2253.73 845.76 2256.10 827.55 2260.32 820.16 C2264.55 812.78 2270.35 810.14 2276.16 810.66 C2281.96 811.19 2289.03 815.94 2295.16 823.33 C2301.28 830.72 2309.93 849.72 2312.89 855.00 L2312.89 915.64Z" fill="#c3adf4"/>
<line x1="2065.4" x2="2065.4" y1="775" y2="858" stroke="#555" stroke-width="0.9" stroke-dasharray="2 2"/>
<line x1="2065.4" x2="2065.4" y1="858" y2="914.4" stroke="#7c3aed" stroke-width="0.9" stroke-dasharray="2 2"/>
<circle cx="2065.4" cy="828.1" r="4.5" fill="#999" opacity="0.3"/><circle cx="2065.4" cy="828.1" r="2.8" fill="#999"/>
<circle cx="2065.4" cy="858.2" r="4.5" fill="#7c3aed" opacity="0.3"/><circle cx="2065.4" cy="858.2" r="2.8" fill="#7c3aed"/>
</svg>
<div class="t" style="left:1966.8px;top:773.5px;font-size:8.2px;color:#6e6e6e;letter-spacing:-0.1px">2.5</div>
<div class="t" style="left:1966.8px;top:800.7px;font-size:8.2px;color:#6e6e6e;letter-spacing:-0.1px">2.0</div>
<div class="t" style="left:1966.8px;top:827.3px;font-size:8.2px;color:#6e6e6e;letter-spacing:-0.1px">1.5</div>
<div class="t" style="left:1966.8px;top:853.9px;font-size:8.2px;color:#6e6e6e;letter-spacing:-0.1px">1.0</div>
<div class="t" style="left:1966.8px;top:880.7px;font-size:8.2px;color:#6e6e6e;letter-spacing:-0.1px">0.5</div>
<div class="t" style="left:1966.8px;top:907.6px;font-size:8.2px;color:#6e6e6e;letter-spacing:-0.1px">0.0</div>
<div class="t" style="left:1973.6px;width:24px;text-align:center;top:920.8px;font-size:7.8px;color:#7a7a7a">Aug</div>
<div class="t" style="left:2002.4px;width:24px;text-align:center;top:920.8px;font-size:7.8px;color:#7a7a7a">Sep</div>
<div class="t" style="left:2031.1px;width:24px;text-align:center;top:920.8px;font-size:7.8px;color:#7a7a7a">Oct</div>
<div class="t" style="left:2060.7px;width:24px;text-align:center;top:920.8px;font-size:7.8px;color:#7a7a7a">Nov</div>
<div class="t" style="left:2089.5px;width:24px;text-align:center;top:920.8px;font-size:7.8px;color:#7a7a7a">Dec</div>
<div class="t" style="left:2118.2px;width:24px;text-align:center;top:920.8px;font-size:7.8px;color:#7a7a7a">Jan</div>
<div class="t" style="left:2147.3px;width:24px;text-align:center;top:920.8px;font-size:7.8px;color:#7a7a7a">Feb</div>
<div class="t" style="left:2176.4px;width:24px;text-align:center;top:920.8px;font-size:7.8px;color:#7a7a7a">Mar</div>
<div class="t" style="left:2205.3px;width:24px;text-align:center;top:920.8px;font-size:7.8px;color:#7a7a7a">Apr</div>
<div class="t" style="left:2234.9px;width:24px;text-align:center;top:920.8px;font-size:7.8px;color:#7a7a7a">May</div>
<div class="t" style="left:2265.4px;width:24px;text-align:center;top:920.8px;font-size:7.8px;color:#7a7a7a">Jun</div>
<div class="t" style="left:2293.4px;width:24px;text-align:center;top:920.8px;font-size:7.8px;color:#7a7a7a">Jul</div>
<div class="b" style="left:1940.6px;top:966.9px;width:344.0999999999999px;height:136.60000000000002px;background:#f1f4f9;border-radius:14px"></div>
<div class="t" style="left:1952.90px;top:982.10px;font-size:16.23px;letter-spacing:-0.417px;color:#333333;-webkit-text-stroke:0.25px #333333;">Here's your monthly ESS simulation.</div>
<div class="t" style="left:1953.90px;top:1004.40px;font-size:16.23px;letter-spacing:-0.264px;color:#333333;-webkit-text-stroke:0.25px #333333;">The system charges during off-peak hours</div>
<div class="t" style="left:1953.60px;top:1026.00px;font-size:16.23px;letter-spacing:-0.387px;color:#333333;-webkit-text-stroke:0.25px #333333;">and discharges at 3 PM to reduce your peak</div>
<div class="t" style="left:1953.60px;top:1048.20px;font-size:16.23px;letter-spacing:-0.230px;color:#333333;-webkit-text-stroke:0.25px #333333;">demand by 32%.</div>
<div class="t" style="left:1953.90px;top:1070.20px;font-size:16.23px;letter-spacing:-0.332px;color:#333333;-webkit-text-stroke:0.25px #333333;">This strategy saves you $1,067 this month!</div>
<div class="b" style="left:1895.1px;top:1153px;width:389.4000000000001px;height:44.5px;border:1.5px solid #e6e3fb;border-radius:16px;box-sizing:border-box;background:#fff"></div>
<div class="t" style="left:1913.40px;top:1166.32px;font-size:17.39px;letter-spacing:-1.102px;color:#767676;">Type a Message</div>
<div class="b" style="left:2293.8px;top:1152px;width:45.59999999999991px;height:45.700000000000045px;background:#8043fc;border-radius:14px"></div>
<svg class="b" style="left:2305.00px;top:1164.20px" width="23.2" height="23.2" viewBox="0 0 24 24" fill="none" stroke="#ffffff" stroke-width="1.95" stroke-linecap="round" stroke-linejoin="round"><path d="M14.536 21.686a.5.5 0 0 0 .937-.024l6.5-19a.496.496 0 0 0-.635-.635l-19 6.5a.5.5 0 0 0-.024.937l7.93 3.18a2 2 0 0 1 1.112 1.11z"/><path d="m21.854 2.147-10.94 10.939"/></svg>
<div class="b" style="left:2288px;top:1250px;width:80px;height:80px;border-radius:50%;box-shadow:0 6px 24px rgba(0,0,0,0.16)"></div><svg class="b" style="left:2288px;top:1250px" width="80" height="80" viewBox="0 0 80 80">
<defs><linearGradient id="fbg" x1="0.35" y1="0" x2="0.65" y2="1"><stop offset="0" stop-color="#8a3ffd"/><stop offset="1" stop-color="#4466ee"/></linearGradient></defs>
<circle cx="40" cy="40" r="40" fill="url(#fbg)"/>
<circle cx="39.7" cy="40" r="22.7" fill="#fff"/><path d="M22.3 50 L22.3 63.6 L34 61 Z" fill="#fff"/>
<ellipse cx="32.2" cy="36" rx="1.9" ry="4" fill="#8b3ffc"/><ellipse cx="46.8" cy="36" rx="1.9" ry="4" fill="#8b3ffc"/>
<path d="M32 47 L47 47 A7.5 5.5 0 0 1 32 47Z" fill="#8b3ffc"/>
</svg>
</div></div></div></body></html>
